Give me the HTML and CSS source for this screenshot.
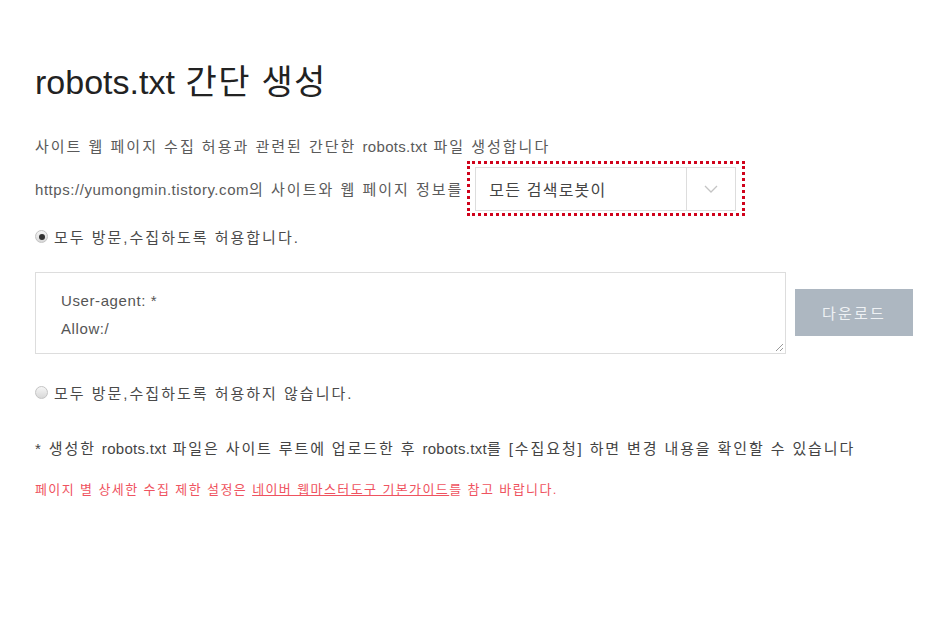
FILE: index.html
```html
<!DOCTYPE html>
<html lang="ko">
<head>
<meta charset="utf-8">
<title>robots.txt 간단 생성</title>
<link rel="stylesheet" href="styles.css">
</head>
<body>
<main class="page">
  <h1 class="title"><span class="en">robots.txt</span> 간단 생성</h1>
  <p class="desc">사이트 웹 페이지 수집 허용과 관련된 간단한 <span class="en">robots.txt</span> 파일 생성합니다</p>
  <div class="site-row">
    <span class="site-text"><span class="en url">https://yumongmin.tistory.com</span>의 사이트와 웹 페이지 정보를</span>
    <div class="select-wrap">
      <div class="select">
        <span class="select-value">모든 검색로봇이</span>
        <span class="select-arrow">
          <svg width="14" height="8" viewBox="0 0 14 8"><path d="M1 1l6 6 6-6" fill="none" stroke="#c4c4c4" stroke-width="1.3"/></svg>
        </span>
      </div>
    </div>
  </div>
  <label class="radio-row">
    <span class="radio checked"></span>
    <span>모두 방문,수집하도록 허용합니다.</span>
  </label>
  <div class="code-row">
    <div class="code-box">
      <div>User-agent: *</div>
      <div>Allow:/</div>
      <svg class="grip" width="10" height="10" viewBox="0 0 10 10"><path d="M9 2L2 9M9 6L6 9" stroke="#999" stroke-width="1"/></svg>
    </div>
    <button class="download">다운로드</button>
  </div>
  <label class="radio-row second">
    <span class="radio"></span>
    <span>모두 방문,수집하도록 허용하지 않습니다.</span>
  </label>
  <p class="note">* 생성한 <span class="en">robots.txt</span> 파일은 사이트 루트에 업로드한 후 <span class="en">robots.txt</span>를 [수집요청] 하면 변경 내용을 확인할 수 있습니다</p>
  <p class="guide">페이지 별 상세한 수집 제한 설정은 <a class="guide-link">네이버 웹마스터도구 기본가이드</a>를 참고 바랍니다.</p>
</main>
</body>
</html>
```
FILE: styles.css
```css
html, body {
  margin: 0;
  padding: 0;
  background: #fff;
}
body {
  font-family: "Liberation Sans", "Noto Sans CJK KR", sans-serif;
  color: #5a5a5a;
}
.page {
  padding: 58px 0 0 35px;
  width: 890px;
}
.en {
  letter-spacing: 0.3px;
}
.en.url {
  letter-spacing: 0.55px;
}
.title {
  margin: 0;
  font-size: 34px;
  font-weight: 400;
  color: #222;
  line-height: 48px;
  letter-spacing: 1.3px;
}
.title .en {
  letter-spacing: 0;
}
.desc {
  margin: 31px 0 0;
  font-size: 15px;
  line-height: 20px;
  letter-spacing: 2px;
}
.site-row {
  display: flex;
  align-items: center;
  margin-top: 4px;
  font-size: 15px;
  letter-spacing: 2px;
}
.select-wrap {
  margin-left: 4px;
  border: 3px dotted #d0021b;
  padding: 3px 6px 2px 5px;
  letter-spacing: 0;
}
.select {
  display: flex;
  width: 259px;
  height: 42px;
  border: 1px solid #ddd;
  background: #fff;
}
.select-value {
  flex: 1;
  display: flex;
  align-items: center;
  padding-left: 13px;
  font-size: 16px;
  letter-spacing: 1.2px;
  color: #444;
}
.select-arrow {
  width: 48px;
  border-left: 1px solid #ddd;
  display: flex;
  align-items: center;
  justify-content: center;
}
.radio-row {
  display: flex;
  align-items: center;
  margin-top: 10px;
  font-size: 15px;
  letter-spacing: 2px;
  color: #4a4a4a;
  gap: 6px;
}
.radio {
  width: 13px;
  height: 13px;
  border-radius: 50%;
  border: 1px solid #c4c4c4;
  background: linear-gradient(#f6f6f6, #d8d8d8);
  box-sizing: border-box;
  position: relative;
  flex: none;
}
.radio.checked::after {
  content: "";
  position: absolute;
  left: 2.5px;
  top: 2.5px;
  width: 6px;
  height: 6px;
  border-radius: 50%;
  background: #333;
}
.code-row {
  display: flex;
  align-items: center;
  margin-top: 25px;
  gap: 9px;
}
.code-box {
  position: relative;
  width: 751px;
  height: 82px;
  box-sizing: border-box;
  border: 1px solid #ddd;
  padding: 14px 25px;
  font-size: 15px;
  letter-spacing: 0.6px;
  line-height: 28px;
  color: #555;
}
.grip {
  position: absolute;
  right: 1px;
  bottom: 1px;
}
.download {
  width: 118px;
  height: 47px;
  margin-bottom: 1px;
  border: 0;
  background: #adb7c1;
  color: #eef1f4;
  font-family: inherit;
  font-size: 15px;
  letter-spacing: 2.2px;
  padding: 0;
}
.radio-row.second {
  margin-top: 28px;
}
.note {
  margin: 36px 0 0;
  font-size: 15px;
  letter-spacing: 1.88px;
  color: #444;
  line-height: 20px;
}
.guide {
  margin: 22px 0 0;
  font-size: 13px;
  letter-spacing: 1.4px;
  color: #ef5360;
  line-height: 18px;
}
.guide-link {
  color: #ef5360;
  text-decoration: underline;
}
```
